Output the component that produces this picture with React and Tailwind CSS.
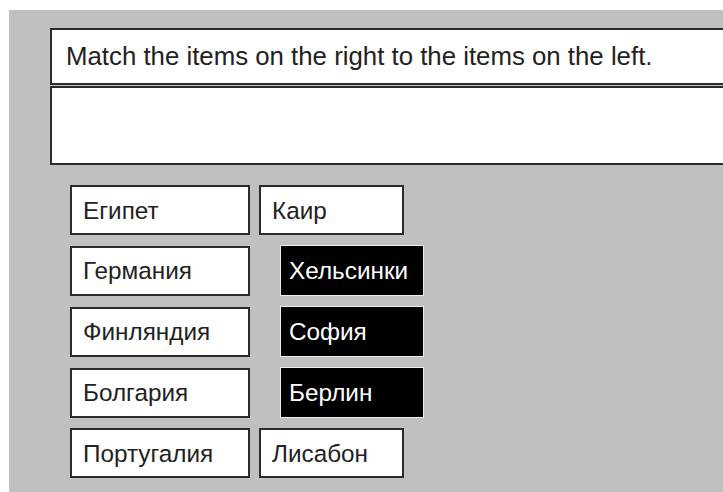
export default function App() {
  const rows = [
    { left: "Египет", right: "Каир", picked: false },
    { left: "Германия", right: "Хельсинки", picked: true },
    { left: "Финляндия", right: "София", picked: true },
    { left: "Болгария", right: "Берлин", picked: true },
    { left: "Португалия", right: "Лисабон", picked: false },
  ];

  return (
    <div className="w-[723px] h-[492px] overflow-hidden bg-white font-['Liberation_Sans',Arial,sans-serif] text-[#222]">
      <div className="ml-[9px] mt-[10px] h-[482px] bg-[#c0c0c0] pt-[18px] pl-[41px]">
        {/* instruction strip and empty answer area */}
        <div className="flex h-[57px] w-[700px] items-center border-2 border-[#2b2b2b] bg-white pl-[14px] text-[25.8px] leading-none">
          Match the items on the right to the items on the left.
        </div>
        <div className="mt-[1px] h-[79px] w-[700px] border-2 border-[#2b2b2b] bg-white" />

        {/* matching pairs */}
        <div className="mt-[20px] ml-[20px] flex flex-col gap-[10px] text-[24.3px] leading-none">
          {rows.map((r) => (
            <div key={r.left} className="flex items-center">
              <div className="flex h-[50px] w-[180px] items-center border-2 border-[#2b2b2b] bg-white pl-[11px] pt-[2px]">
                {r.left}
              </div>
              {r.picked ? (
                <div className="ml-[30px] flex h-[51px] w-[144px] items-center border border-[#ececec] bg-black pl-[8px] pt-[2px] text-white">
                  {r.right}
                </div>
              ) : (
                <div className="ml-[9px] flex h-[50px] w-[145px] items-center border-2 border-[#2b2b2b] bg-white pl-[11px] pt-[2px]">
                  {r.right}
                </div>
              )}
            </div>
          ))}
        </div>
      </div>
    </div>
  );
}
